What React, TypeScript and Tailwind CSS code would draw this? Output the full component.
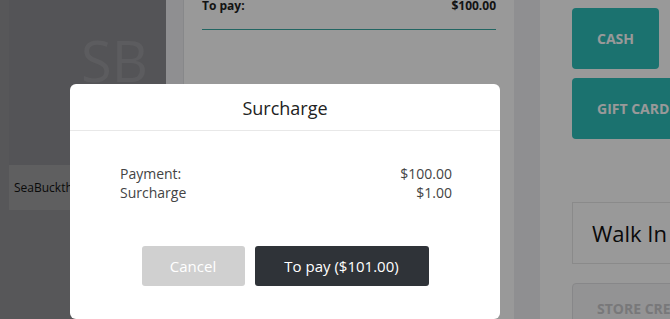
import React from 'react';

const TEAL = 'bg-[#2dbeb9]';

const SurchargeModal: React.FC = () => {
  return (
    <div className="absolute left-[70px] top-[84px] z-20 w-[430px] rounded-[6px] bg-white">
      {/* header */}
      <div className="flex h-[47px] items-center justify-center border-b border-[#e8e8e8] pt-[2px] text-[18px] text-[#222]">
        Surcharge
      </div>

      {/* rows */}
      <div className="pl-[50px] pr-[48px] pt-[33px] text-[14px] leading-[19px] text-[#444]">
        <div className="flex justify-between">
          <span>Payment:</span>
          <span>$100.00</span>
        </div>
        <div className="flex justify-between">
          <span>Surcharge</span>
          <span>$1.00</span>
        </div>
      </div>

      {/* actions */}
      <div className="mt-[44px] flex justify-center gap-[10px] pb-[33px] text-[15px] text-white">
        <button className="h-[40px] w-[103px] rounded-[3px] bg-[#d0d0d0]">Cancel</button>
        <button className="h-[40px] w-[174px] rounded-[3px] bg-[#2f3338]">To pay ($101.00)</button>
      </div>
    </div>
  );
};

const App: React.FC = () => {
  return (
    <div
      className="relative flex h-[319px] w-[670px] overflow-hidden bg-white"
      style={{ fontFamily: '"Open Sans", "Liberation Sans", sans-serif' }}
    >
      {/* product column */}
      <div className="w-[166px] shrink-0 bg-[#919194] pl-[9px]">
        <div className="h-[165px] bg-[#8c8c91] pl-[72px] pt-[32px] text-[56px] leading-none text-[#9a9a9e]">
          SB
        </div>
        <div className="flex h-[45px] items-center overflow-hidden whitespace-nowrap bg-[#9f9fa0] px-[5px] text-[12px] text-[#111]">
          SeaBuckthorn
        </div>
      </div>

      <div className="w-[18px] shrink-0 border-r border-[#e2e3e6] bg-[#eeeff2]" />

      {/* order summary */}
      <div className="w-[330px] shrink-0 bg-white px-[18px]">
        <div className="-mt-[2px] flex justify-between border-b border-[#3aa9a3] pb-[15px] text-[12px] font-bold leading-[16px] text-[#222]">
          <span>To pay:</span>
          <span>$100.00</span>
        </div>
      </div>

      <div className="w-[26px] shrink-0 bg-[#eeeff2]" />

      {/* payment methods */}
      <div className="flex-1 bg-white pl-[32px]">
        <button className={`mt-[8px] flex h-[61px] w-[87px] items-center rounded-[4px] ${TEAL} pl-[25px] text-[14px] font-bold text-white`}>
          CASH
        </button>
        <button className={`mt-[9px] flex h-[61px] w-[140px] items-center whitespace-nowrap rounded-[4px] ${TEAL} pl-[25px] text-[14px] font-bold text-white`}>
          GIFT CARD
        </button>
        <div className="mt-[63px] flex h-[62px] w-[140px] items-center whitespace-nowrap border border-[#e6e6e6] pl-[19px] text-[22px] text-[#111]">
          Walk In
        </div>
        <button className="mt-[19px] flex h-[50px] w-[140px] items-center whitespace-nowrap rounded-[4px] border border-[#e2e2e4] bg-[#f5f5f7] pl-[24px] text-[14px] font-bold text-[#c9c9cb]">
          STORE CREDIT
        </button>
      </div>

      {/* backdrop */}
      <div className="absolute inset-0 z-10 bg-black/40" />

      <SurchargeModal />
    </div>
  );
};

export default App;
